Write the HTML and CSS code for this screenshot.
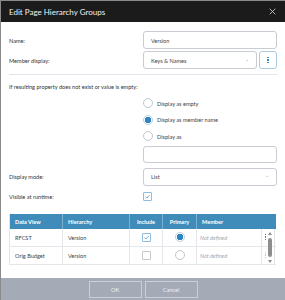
FILE: index.html
```html
<!DOCTYPE html>
<html lang="en">
<head>
  <meta charset="UTF-8" />
  <title>Edit Page Hierarchy Groups</title>
  <link rel="stylesheet" href="styles.css">
</head>
<body>

<div class="dialog">
  <div class="titlebar">
    <span>Edit Page Hierarchy Groups</span>
    <svg class="close" viewBox="0 0 10 10"><path d="M1 1L9 9M9 1L1 9"/></svg>
  </div>

  <div class="content">
    <div class="row">
      <label>Name:</label>
      <div class="field"><div class="input">Version</div></div>
    </div>
    <div class="row">
      <label>Member display:</label>
      <div class="field">
        <div class="input select">Keys &amp; Names <span class="chev">&#8964;</span></div>
        <div class="kebab-btn"><i></i><i></i><i></i></div>
      </div>
    </div>

    <hr class="sep">

    <p class="note">If resulting property does not exist or value is empty:</p>

    <div class="options">
      <div class="radio-row"><span class="radio"></span>Display as empty</div>
      <div class="radio-row"><span class="radio on"></span>Display as member name</div>
      <div class="radio-row"><span class="radio"></span>Display as</div>
      <div class="input blank"></div>
    </div>

    <div class="row mode">
      <label>Display mode:</label>
      <div class="field"><div class="input select">List <span class="chev">&#8964;</span></div></div>
    </div>
    <div class="row visible">
      <label>Visible at runtime:</label>
      <div class="field"><span class="check on"><svg viewBox="0 0 10 10"><path d="M2 5.2L4.2 7.2L8 3"/></svg></span></div>
    </div>

    <div class="grid">
      <div class="th">Data View</div>
      <div class="th">Hierarchy</div>
      <div class="th">Include</div>
      <div class="th">Primary</div>
      <div class="th span">Member</div>

      <div class="td">RFCST</div>
      <div class="td">Version</div>
      <div class="td mid"><span class="check on"><svg viewBox="0 0 10 10"><path d="M2 5.2L4.2 7.2L8 3"/></svg></span></div>
      <div class="td mid"><span class="radio on"></span></div>
      <div class="td muted">Not defined</div>
      <div class="td dots blue"><i></i><i></i><i></i></div>

      <div class="td">Orig Budget</div>
      <div class="td">Version</div>
      <div class="td mid"><span class="check"></span></div>
      <div class="td mid"><span class="radio"></span></div>
      <div class="td muted">Not defined</div>
      <div class="td dots"><i></i><i></i><i></i></div>

      <div class="scrollbar">
        <span class="arrow up"></span>
        <span class="thumb"></span>
        <span class="arrow down"></span>
      </div>
    </div>
  </div>

  <div class="footer">
    <button type="button">OK</button>
    <button type="button">Cancel</button>
  </div>
</div>

</body>
</html>
```

FILE: styles.css
```css
body {
  margin: 0;
  font-family: Lato, "Noto Sans", sans-serif;
  background-color: #ffffff;
}

.dialog {
  width: 285px;
  height: 300px;
  box-sizing: border-box;
  border-left: 1px solid #8a8a8a;
  border-top: 1px solid #8a8a8a;
  display: flex;
  flex-direction: column;
  background-color: #ffffff;
}

.titlebar {
  height: 21px;
  background-color: #1b1b1b;
  color: #f2f2f2;
  font-size: 8px;
  padding: 0 9px 0 8px;
  display: flex;
  align-items: center;
  justify-content: space-between;
}

.close {
  width: 7px;
  height: 7px;
  stroke: #cfcfcf;
  stroke-width: 1.2;
}

.content {
  flex-grow: 1;
  padding: 9px 8px 0 8px;
  font-size: 5.6px;
  color: #333;
}

.row {
  display: flex;
  align-items: center;
  height: 18px;
  margin-bottom: 2px;
}

.row label {
  width: 134px;
  flex-shrink: 0;
}

.field {
  flex-grow: 1;
  display: flex;
  gap: 2px;
  align-items: center;
}

.input {
  flex-grow: 1;
  height: 18px;
  box-sizing: border-box;
  border: 1px solid #c9ccd2;
  border-radius: 3px;
  padding: 0 7px;
  display: flex;
  align-items: center;
  justify-content: space-between;
  color: #444;
}

.chev {
  color: #aaa;
  font-size: 5px;
  margin-top: -3px;
}

.kebab-btn {
  width: 18px;
  height: 18px;
  box-sizing: border-box;
  border: 1px solid #a9cbe4;
  border-radius: 3px;
  display: flex;
  flex-direction: column;
  align-items: center;
  justify-content: center;
  gap: 1px;
}

.kebab-btn i,
.dots i {
  display: block;
  width: 1.4px;
  height: 1.4px;
  background-color: #3b87c2;
}

.sep {
  border: none;
  border-top: 1px solid #e1e4ea;
  margin: 5px 0 0 0;
}

.note {
  margin: 0;
  height: 12px;
  line-height: 12px;
  margin-top: 6px;
}

.options {
  margin-left: 134px;
  padding-top: 2px;
}

.radio-row {
  display: flex;
  align-items: center;
  gap: 4px;
  height: 16.5px;
  color: #444;
}

.radio {
  width: 10px;
  height: 10px;
  box-sizing: border-box;
  border: 1px solid #c4c7cc;
  border-radius: 50%;
  display: inline-block;
  flex-shrink: 0;
}

.radio.on {
  border-color: #b9cfe0;
  background: radial-gradient(circle, #2e86c1 0 3px, #ffffff 3.4px);
}

.input.blank {
  margin-top: 1px;
  height: 17px;
  margin-bottom: 5px;
}

.row.mode {
  margin-bottom: 3px;
}

.row.visible {
  height: 16px;
  margin-bottom: 9px;
}

.check {
  width: 9px;
  height: 9px;
  box-sizing: border-box;
  border: 1px solid #c4c7cc;
  border-radius: 1px;
  display: inline-flex;
  align-items: center;
  justify-content: center;
}

.check.on {
  border-color: #8fbde0;
}

.check svg {
  width: 7px;
  height: 7px;
  fill: none;
  stroke: #4a95cf;
  stroke-width: 1.1;
}

.grid {
  position: relative;
  display: grid;
  grid-template-columns: 53px 67px 33px 34px 65px 14px;
  grid-auto-rows: 18px;
  grid-template-rows: 15px;
  border-left: 1px solid #dfe3e8;
  border-right: 1px solid #dfe3e8;
  width: 266px;
  box-sizing: border-box;
}

.th {
  background-color: #3f8cba;
  color: #ffffff;
  font-weight: bold;
  display: flex;
  align-items: center;
  padding-left: 5px;
  border-right: 1px solid #7db1d2;
}

.th:nth-child(3),
.th:nth-child(4) {
  justify-content: center;
  padding-left: 0;
}

.th.span {
  grid-column: span 2;
  border-right: none;
}

.td {
  display: flex;
  align-items: center;
  padding-left: 5px;
  border-right: 1px solid #e3e6eb;
  border-bottom: 1px solid #e3e6eb;
  color: #444;
}

.td.mid {
  justify-content: center;
  padding-left: 0;
}

.td.muted {
  color: #a3a7ad;
  font-style: italic;
  padding-left: 3px;
}

.td.dots {
  flex-direction: column;
  justify-content: center;
  align-items: flex-start;
  padding-left: 3px;
  gap: 1px;
  border-right: none;
}

.td.dots i {
  background-color: #c4c7cc;
}

.td.dots.blue i {
  background-color: #3b87c2;
}

.scrollbar {
  position: absolute;
  right: 1px;
  top: 16px;
  bottom: 2px;
  width: 6px;
  display: flex;
  flex-direction: column;
  align-items: center;
  justify-content: space-between;
}

.arrow {
  width: 0;
  height: 0;
  border-left: 2px solid transparent;
  border-right: 2px solid transparent;
}

.arrow.up {
  border-bottom: 3px solid #8e8e8e;
  margin-top: 2px;
}

.arrow.down {
  border-top: 3px solid #8e8e8e;
}

.thumb {
  width: 4px;
  flex-grow: 1;
  margin: 3px 0;
  background-color: #8e8e8e;
  border-radius: 2px;
}

.footer {
  height: 22px;
  background-color: #a4abb7;
  display: flex;
  justify-content: center;
  align-items: center;
  gap: 3px;
}

button {
  width: 53px;
  height: 17px;
  background-color: #a4abb7;
  border: 1px solid #cbd0d8;
  color: #eef0f3;
  font-family: Lato, "Noto Sans", sans-serif;
  font-size: 5.6px;
  padding: 0;
}
```
